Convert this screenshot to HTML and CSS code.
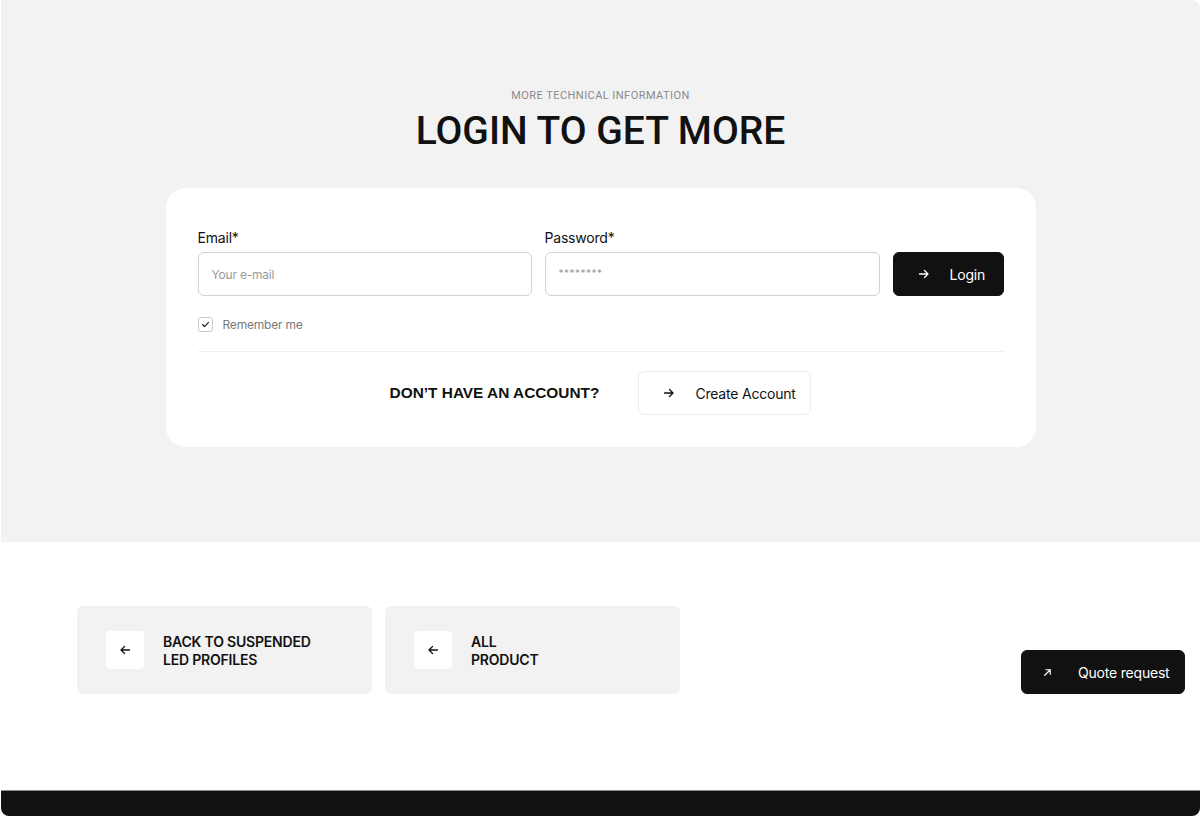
FILE: index.html
```html
<!DOCTYPE html>
<html lang="en">
<head>
<meta charset="utf-8">
<title>Login to get more</title>
<link rel="stylesheet" href="styles.css">
</head>
<body>
<div class="page">
  <section class="login-section">
    <p class="eyebrow">MORE TECHNICAL INFORMATION</p>
    <h1 class="title">LOGIN TO GET MORE</h1>
    <div class="card">
      <form class="form-row">
        <label class="field field-email">
          <span class="label">Email*</span>
          <span class="input"><span class="placeholder">Your e-mail</span></span>
        </label>
        <label class="field field-pass">
          <span class="label">Password*</span>
          <span class="input"><span class="placeholder stars">********</span></span>
        </label>
        <button type="button" class="btn btn-dark btn-login">
          <svg class="ico" viewBox="0 0 12 12" width="12" height="12"><path d="M1.5 6h8.5M6.5 2.5 10 6l-3.5 3.5" fill="none" stroke="currentColor" stroke-width="1.3" stroke-linecap="round" stroke-linejoin="round"/></svg>
          <span>Login</span>
        </button>
      </form>
      <div class="remember">
        <span class="checkbox"><svg viewBox="0 0 10 10" width="9" height="9"><path d="M1.8 5.2 4 7.3 8.3 2.7" fill="none" stroke="#222" stroke-width="1.4" stroke-linecap="round" stroke-linejoin="round"/></svg></span>
        <span class="remember-text">Remember me</span>
      </div>
      <div class="divider"></div>
      <div class="signup">
        <span class="signup-q">DON’T HAVE AN ACCOUNT?</span>
        <button type="button" class="btn btn-light">
          <svg class="ico" viewBox="0 0 12 12" width="12" height="12"><path d="M1.5 6h8.5M6.5 2.5 10 6l-3.5 3.5" fill="none" stroke="currentColor" stroke-width="1.3" stroke-linecap="round" stroke-linejoin="round"/></svg>
          <span>Create Account</span>
        </button>
      </div>
    </div>
  </section>
  <section class="nav-section">
    <a class="back-card" href="#">
      <span class="back-ico"><svg viewBox="0 0 12 12" width="12" height="12"><path d="M10.5 6H2M5.5 2.5 2 6l3.5 3.5" fill="none" stroke="#111" stroke-width="1.3" stroke-linecap="round" stroke-linejoin="round"/></svg></span>
      <span class="back-text">BACK TO SUSPENDED<br>LED PROFILES</span>
    </a>
    <a class="back-card" href="#">
      <span class="back-ico"><svg viewBox="0 0 12 12" width="12" height="12"><path d="M10.5 6H2M5.5 2.5 2 6l3.5 3.5" fill="none" stroke="#111" stroke-width="1.3" stroke-linecap="round" stroke-linejoin="round"/></svg></span>
      <span class="back-text">ALL<br>PRODUCT</span>
    </a>
    <button type="button" class="btn btn-dark quote">
      <svg class="ico" viewBox="0 0 12 12" width="11" height="11"><path d="M3 9 9 3M4.2 3H9v4.8" fill="none" stroke="currentColor" stroke-width="1.3" stroke-linecap="round" stroke-linejoin="round"/></svg>
      <span>Quote request</span>
    </button>
  </section>
  <footer class="footer"></footer>
</div>
</body>
</html>
```
FILE: styles.css
```css
* { box-sizing: border-box; }
html, body { margin: 0; padding: 0; background: #fff; }
body { font-family: Inter, "Noto Sans", sans-serif; color: #111; }

.page {
  width: 1200px;
  height: 816px;
  display: flex;
  flex-direction: column;
  padding-left: 1px;
  position: relative;
}

.login-section {
  height: 542px;
  background: #f2f2f2;
  border-top-right-radius: 8px;
  display: flex;
  flex-direction: column;
  align-items: center;
  padding-top: 89px;
}

.eyebrow {
  margin: 0;
  font-family: Roboto, "Noto Sans", sans-serif;
  font-size: 11px;
  line-height: 13px;
  letter-spacing: 0.45px;
  color: #8a8a8a;
}

.title {
  margin: 6px 0 0;
  font-family: Roboto, "Noto Sans", sans-serif;
  font-weight: 500;
  font-size: 39px;
  line-height: 46px;
  letter-spacing: 0;
  color: #111;
}

.card {
  margin-top: 34px;
  width: 870px;
  background: #fff;
  border-radius: 20px;
  padding: 41px 32px 32px;
}

.form-row {
  margin: 0;
  display: flex;
  align-items: flex-end;
  gap: 13px;
}

.field { display: flex; flex-direction: column; gap: 6px; }
.field-email { width: 334px; }
.field-pass { width: 335px; }

.label { font-size: 14px; line-height: 17px; color: #111; letter-spacing: -0.2px; }

.input {
  height: 44px;
  border: 1px solid #d2d2d2;
  border-radius: 6px;
  display: flex;
  align-items: center;
  padding-left: 13px;
  background: #fff;
}
.placeholder { font-size: 12px; color: #9a9a9a; letter-spacing: -0.2px; }
.stars { font-size: 10px; letter-spacing: 0.5px; margin-top: -3px; }

.btn {
  font-family: Inter, "Noto Sans", sans-serif;
  display: flex;
  align-items: center;
  border-radius: 6px;
  cursor: pointer;
  height: 44px;
  font-size: 14px;
  letter-spacing: -0.2px;
  white-space: nowrap;
}

.btn-dark { background: #111; color: #fff; border: 1px solid #111; }
.btn-login { width: 111px; padding: 0 0 0 24px; gap: 20px; }

.remember {
  margin-top: 21px;
  display: flex;
  align-items: center;
  gap: 10px;
}
.checkbox {
  width: 15px;
  height: 15px;
  border: 1px solid #c9c9c9;
  border-radius: 3px;
  display: flex;
  align-items: center;
  justify-content: center;
}
.remember-text { font-size: 12px; color: #7a7a7a; letter-spacing: -0.2px; }

.divider { margin-top: 19px; height: 1px; background: #efefef; }

.signup {
  margin-top: 19px;
  display: flex;
  align-items: center;
  justify-content: center;
  gap: 39px;
}
.signup-q {
  font-family: "Liberation Sans", Arial, sans-serif;
  font-weight: 700;
  font-size: 15.4px;
  letter-spacing: 0;
  color: #111;
}
.btn-light {
  background: #fff;
  color: #111;
  border: 1px solid #ececec;
  width: 173px;
  padding: 0 0 0 24px;
  gap: 20px;
}

.nav-section {
  flex: 1;
  background: #fff;
  display: flex;
  align-items: flex-start;
  gap: 13px;
  padding: 64px 0 0 76px;
}

.back-card {
  width: 295px;
  height: 88px;
  background: #f2f2f2;
  border-radius: 6px;
  display: flex;
  align-items: center;
  gap: 19px;
  padding-left: 29px;
  text-decoration: none;
  color: #111;
}
.back-ico {
  width: 38px;
  height: 38px;
  background: #fff;
  border-radius: 4px;
  display: flex;
  align-items: center;
  justify-content: center;
}
.back-text {
  font-family: Inter, "Noto Sans", sans-serif;
  font-weight: 600;
  font-size: 14px;
  line-height: 18px;
  letter-spacing: -0.2px;
  margin-top: 1px;
}

.quote {
  position: absolute;
  left: 1021px;
  top: 650px;
  width: 164px;
  padding: 0 0 0 20px;
  gap: 25px;
}

.footer {
  height: 26px;
  background: #111;
  border-top: 1px solid #8a8a8a;
  border-bottom-left-radius: 8px;
  border-bottom-right-radius: 8px;
}
```
